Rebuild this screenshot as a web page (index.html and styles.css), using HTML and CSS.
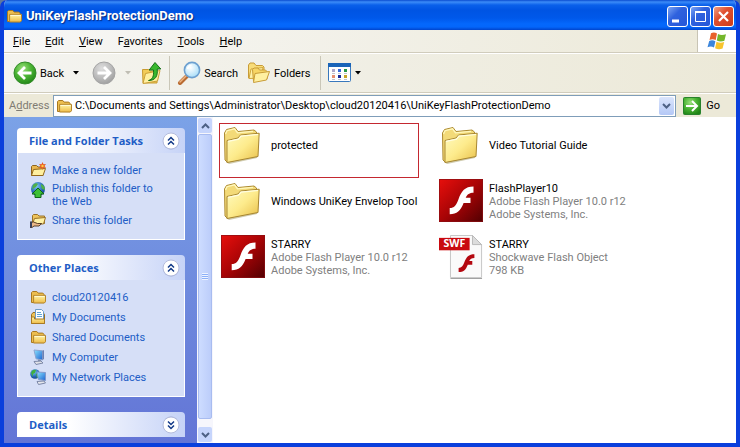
FILE: index.html
```html
<!DOCTYPE html>
<html lang="en">
<head>
<meta charset="utf-8">
<title>UniKeyFlashProtectionDemo</title>
<link rel="stylesheet" href="styles.css">
</head>
<body>
<svg class="sprite" aria-hidden="true">
  <defs>
    <linearGradient id="g-folder" x1="0" y1="0" x2="1" y2="1"><stop offset="0" stop-color="#fffbc0"/><stop offset=".5" stop-color="#fdeb8c"/><stop offset="1" stop-color="#e8be48"/></linearGradient>
    <linearGradient id="g-small" x1="0" y1="0" x2="0" y2="1"><stop offset="0" stop-color="#fff6a8"/><stop offset="1" stop-color="#eebb48"/></linearGradient>
    <radialGradient id="g-green" cx=".4" cy=".3" r=".75"><stop offset="0" stop-color="#9be07c"/><stop offset=".5" stop-color="#4bb434"/><stop offset="1" stop-color="#1f8416"/></radialGradient>
    <radialGradient id="g-gray" cx=".4" cy=".3" r=".75"><stop offset="0" stop-color="#dedede"/><stop offset=".6" stop-color="#bababa"/><stop offset="1" stop-color="#9c9c9c"/></radialGradient>
    <linearGradient id="g-red" x1="0" y1="0" x2="1" y2="1"><stop offset="0" stop-color="#e80f0c"/><stop offset=".5" stop-color="#a80406"/><stop offset="1" stop-color="#500002"/></linearGradient>
    <linearGradient id="g-screen" x1="0" y1="0" x2="1" y2="1"><stop offset="0" stop-color="#8ce4ff"/><stop offset="1" stop-color="#1c62d0"/></linearGradient>
    <radialGradient id="g-globe" cx=".4" cy=".3" r=".8"><stop offset="0" stop-color="#7cc8f0"/><stop offset=".6" stop-color="#2464b8"/><stop offset="1" stop-color="#103c80"/></radialGradient>
    <radialGradient id="g-lens" cx=".4" cy=".35" r=".7"><stop offset="0" stop-color="#ffffff"/><stop offset="1" stop-color="#a4dcf8"/></radialGradient>
  </defs>
  <symbol id="i-folder" viewBox="0 0 16 16">
    <path d="M1.500 13.500V3.600L2.600 2.500h4.200l1.400 1.600h4.600l1.200 1.200v8.400z" fill="#ecbe50" stroke="#a87820"/>
    <path d="M3.600 6.400h11.900v6.400l-1.200 1.200H3.600z" fill="url(#g-small)" stroke="#b5852a"/>
    <path d="M4.500 7.400h10" stroke="#fffbd8"/>
  </symbol>
  <symbol id="i-bigfolder" viewBox="0 0 44 44">
    <path d="M5 39 8 41 36 35l2-25-3 2z" fill="#a0955c" opacity=".5"/>
    <path d="M3.500 10 5.500 6.500 14 4.500l3 4 16-1.500 2.500 2V33L6 39l-2-2z" fill="#f3da78" stroke="#ac8a32"/>
    <path d="M4.500 11 6 7.700 13.500 5.800l3 4L32 8.300" fill="none" stroke="#fff8bc" stroke-width="1.300"/>
    <path d="M6 17.500 17 15l2.500-3 18.700-1.800L37 33.500 6 39.500z" fill="url(#g-folder)" stroke="#a88732"/>
    <path d="M7 18.400 17.500 16.100l2.500-3L37 11.500" fill="none" stroke="#fffde0" stroke-width="1.200"/>
  </symbol>
  <symbol id="i-flash" viewBox="0 0 44 44">
    <path d="M0 0h44v43H0z" fill="url(#g-red)"/>
    <path d="M.5.5h43v42H.5z" fill="none" stroke="#8c1014" opacity=".7"/>
    <path d="M34.500 7.500v6.200c-4 0-6.200 1.400-7.800 5.100h4.800V24h-6.900c-3 8-6.700 11.200-13.900 11.200V29c4.400 0 6.600-2.800 8.700-8.600C22.300 12.200 26 7.500 34.500 7.500z" fill="#fff"/>
  </symbol>
  <symbol id="i-swf" viewBox="0 0 46 46">
    <path d="M12 .5h23L44.500 10v34.500H12z" fill="#fafafa" stroke="#c4c4c4"/>
    <path d="M35 .5V10h9.500z" fill="#dcdcdc" stroke="#b8b8b8"/>
    <path d="M12 45.500h33" stroke="#9c9c9c"/>
    <path d="M0 3h32v13H0z" fill="#c90a10"/>
    <path d="M37 20v4c-3 0-4.400 1-5.400 3.300h3.200V31h-4.700c-2.200 5.600-4.500 7.600-9.600 7.600v-4.200c3 0 4.500-2 6-5.900C28.500 23 31 20 37 20z" fill="#b40810"/>
    <text x="16" y="13" class="swf-label">SWF</text>
  </symbol>
  <symbol id="i-back" viewBox="0 0 24 24">
    <circle cx="12" cy="12" r="11" fill="url(#g-green)" stroke="#338b2a"/>
    <path d="M18.500 12H7M12 6l-6 6 6 6" fill="none" stroke="#fff" stroke-width="2.800"/>
  </symbol>
  <symbol id="i-forward" viewBox="0 0 24 24">
    <circle cx="12" cy="12" r="11" fill="url(#g-gray)" stroke="#a4a4a4"/>
    <path d="M5.500 12H17M12 6l6 6-6 6" fill="none" stroke="#fff" stroke-width="2.800"/>
  </symbol>
  <symbol id="i-up" viewBox="0 0 24 24">
    <path d="M2.500 8.500h6l1.500 1.500h7v12l-14 0z" fill="#f2cc58" stroke="#c89a30"/>
    <path d="M5.500 12.500 20 9.500l-2.500 10.500L3 22.500z" fill="#fff0a0" stroke="#cba038"/>
    <path d="M8.500 19.500c4-1 5.500-4 5-10.500H9.200L15 1.500 20.800 8h-3.600c.8 7-1.700 11.500-8.700 11.500z" fill="#39b82e" stroke="#167016"/>
  </symbol>
  <symbol id="i-search" viewBox="0 0 24 24">
    <path d="M10 15 3 22" stroke="#b96b32" stroke-width="4" stroke-linecap="round"/>
    <path d="M9 15 3 21" stroke="#eeb684" stroke-width="1.500" stroke-linecap="round"/>
    <circle cx="15" cy="9" r="7.600" fill="url(#g-lens)" stroke="#6da0d0" stroke-width="1.600"/>
    <path d="M10.500 8a5 5 0 0 1 4-3.800" fill="none" stroke="#fff" stroke-width="1.600"/>
  </symbol>
  <symbol id="i-folders" viewBox="0 0 24 24">
    <path d="M1.500 17V4L3 2h4l2 2.500h6.500L17 6v10z" fill="#f8dc78" stroke="#c89c38"/>
    <path d="m4 8 12-1.500L14 17 2 17.500z" fill="#fff2a8" stroke="#d0a63e"/>
    <path d="m6.500 20-1-11.500L7 7h4l1.500 2h6l1.500 1.500V18z" fill="#f7d666" stroke="#c89c38"/>
    <path d="m8 12.500 14.500-2L19.500 19 6.500 21.500z" fill="#fff0a0" stroke="#c89c38"/>
  </symbol>
  <symbol id="i-views" viewBox="0 0 24 20">
    <rect x=".5" y=".5" width="22" height="18" rx="1" fill="#fff" stroke="#3978bc"/>
    <path d="M0 0h23v4H0z" fill="#1a64b8"/>
    <path d="M4 6h3v3H4z" fill="#b0a8c8"/><path d="M10 6h3v3h-3z" fill="#3868d8"/><path d="M16 6h3v3h-3z" fill="#289848"/>
    <path d="M4 12h3v3H4z" fill="#e89070"/><path d="M10 12h3v3h-3z" fill="#1c2c98"/><path d="M16 12h3v3h-3z" fill="#c8a428"/>
    <path d="M4 10.500h3m3 0h3m3 0h3M4 16.500h3m3 0h3m3 0h3" stroke="#c4c4cc"/>
  </symbol>
  <symbol id="i-flag" viewBox="0 0 20 18">
    <path d="M4 1.200C6 .2 8 .2 10 1.500L8.700 8C6.500 6.800 4.500 6.900 2.500 7.900z" fill="#e8622c"/>
    <path d="M11 2c2.500 1.200 5 1.200 8 .2l-1.600 6.500c-2.500 1-5 1-7.600-.2z" fill="#74b72c"/>
    <path d="M2.200 9c2-1 4-1 6.200.2L7 15.500c-2.200-1.200-4-1.200-6.500-.2z" fill="#3c86dc"/>
    <path d="M9.500 9.700c2.500 1.200 5 1.200 7.700.2l-1.600 6.500c-2.500 1-4.900 1-7.500-.2z" fill="#f8c42c"/>
  </symbol>
  <symbol id="i-go" viewBox="0 0 18 18">
    <rect x=".5" y=".5" width="17" height="17" rx="1" fill="url(#g-green)" stroke="#28822c"/>
    <path d="M3 9h11M9 4l5 5-5 5" fill="none" stroke="#fff" stroke-width="2"/>
  </symbol>
  <symbol id="i-new" viewBox="0 0 16 16">
    <path d="M1.500 13.500V4.500l1-1h4L8 5h5v8.500z" fill="#e9b850" stroke="#8c6420"/>
    <path d="m3.500 7.500 12-1-2.500 7H1.500z" fill="#fff0a0" stroke="#94691c"/>
    <path d="m12.500 0 1 2.300 2.500-.3-1.500 2L16 6l-2.600-.3L12.500 8l-1-2.300L9 6l1.500-2L9 2l2.500.3z" fill="#e85c20"/>
    <circle cx="12.500" cy="4" r="1.200" fill="#ffd040"/>
  </symbol>
  <symbol id="i-publish" viewBox="0 0 16 16">
    <circle cx="8" cy="7" r="7" fill="url(#g-globe)"/>
    <path d="M3 3c2-2 4-2 5-1L6 5 4 6 2 8zM11 2c3 1 4 3 4 6l-3-1-1-3z" fill="#50b048"/>
    <path d="m8 6 6 6h-3v3.500H5V12H2z" fill="#3cc034" stroke="#0f6418"/>
  </symbol>
  <symbol id="i-share" viewBox="0 0 16 16">
    <path d="M2.500 11V3.500l1-1h4L9 4h5.500v7.500z" fill="#edc35c" stroke="#9a7228"/>
    <path d="m4.500 6.500 11-1-2 6.500H2.500z" fill="#fff1a4" stroke="#9a7228"/>
    <path d="M0 10.500 3.500 10l4 1.500h4.200L9 14H4L2 15.500H0z" fill="#eab888" stroke="#5a4028"/>
    <path d="M0 9.500h2v6H0z" fill="#38405c"/>
  </symbol>
  <symbol id="i-docs" viewBox="0 0 16 16">
    <path d="M1.500 14.500v-9l1.500-2h10l1.500 2v9z" fill="#edc158" stroke="#9a7020"/>
    <path d="M5.500.5h6l2 2v9h-8z" fill="#fff" stroke="#6c9cc8"/>
    <path d="M7 3.500h4M7 5.500h5M7 7.500h5" stroke="#60a4d8"/>
    <path d="M1.500 14.500V8h3v2h10v4.500z" fill="url(#g-small)" stroke="#a87a24"/>
  </symbol>
  <symbol id="i-computer" viewBox="0 0 16 16">
    <path d="m4 1 8.500.8V11L6 9.800z" fill="url(#g-screen)" stroke="#8ca4d0"/>
    <path d="m12.500 1.800 1.500-.8v9L12.500 11z" fill="#6c80b4"/>
    <path d="m8 10.500 3 .5v2H8z" fill="#8490ac"/>
    <path d="m4 12.500 7-.5 2 2-7 1.500z" fill="#e0e2e8" stroke="#7c88a8"/>
  </symbol>
  <symbol id="i-network" viewBox="0 0 16 16">
    <circle cx="5" cy="5" r="4.800" fill="url(#g-globe)"/>
    <path d="M1 4c1-3 3-4 5-3L5 4 3 5v3zM6 5l3-1v4L7 9z" fill="#40b040"/>
    <path d="m7 3 8.500.5v8L8.500 10.500z" fill="url(#g-screen)" stroke="#8098cc"/>
    <path d="m7 12.500 7-.5 1.500 2-7 1.500z" fill="#e4e6ec" stroke="#7c88a8"/>
  </symbol>
  <symbol id="i-caret" viewBox="0 0 6 4"><path d="M0 0h6L3 3.500z"/></symbol>
  <symbol id="i-chevron" viewBox="0 0 9 6"><path d="m1 1 3.500 3.500L8 1" fill="none" stroke="#4d6185" stroke-width="2"/></symbol>
  <symbol id="i-double" viewBox="0 0 18 18">
    <circle cx="9" cy="9.500" r="8" fill="#8c9cd0" opacity=".6"/>
    <circle cx="9" cy="9" r="8" fill="#fff" stroke="#b4bcdc"/>
    <path d="m6 8.500 3-3 3 3m-6 4 3-3 3 3" fill="none" stroke="#123a88" stroke-width="1.500"/>
  </symbol>
</svg>

<div class="window">
  <header class="titlebar">
    <svg class="icon"><use href="#i-folder"/></svg>
    <h1>UniKeyFlashProtectionDemo</h1>
    <div class="caption-buttons">
      <button aria-label="Minimize"><svg viewBox="0 0 19 19"><path d="M4 14h7" stroke="#fff" stroke-width="3"/></svg></button>
      <button aria-label="Maximize"><svg viewBox="0 0 19 19"><path d="M4.500 4.500h10v10h-10z" fill="none" stroke="#fff"/><path d="M4 5h11" stroke="#fff" stroke-width="2"/></svg></button>
      <button class="close" aria-label="Close"><svg viewBox="0 0 19 19"><path d="m5 5 9 9m0-9-9 9" stroke="#fff" stroke-width="2.200"/></svg></button>
    </div>
  </header>

  <div class="menubar">
    <nav class="menus">
      <button><u>F</u>ile</button>
      <button><u>E</u>dit</button>
      <button><u>V</u>iew</button>
      <button>F<u>a</u>vorites</button>
      <button><u>T</u>ools</button>
      <button><u>H</u>elp</button>
    </nav>
    <div class="brand"><svg><use href="#i-flag"/></svg></div>
  </div>

  <div class="toolbar">
    <button class="tool"><svg class="tool-icon"><use href="#i-back"/></svg>Back</button>
    <button class="drop" aria-label="Back history"><svg><use href="#i-caret"/></svg></button>
    <button class="tool forward" aria-label="Forward" disabled><svg class="tool-icon"><use href="#i-forward"/></svg></button>
    <button class="drop" aria-label="Forward history" disabled><svg><use href="#i-caret"/></svg></button>
    <button class="tool" aria-label="Up"><svg class="tool-icon"><use href="#i-up"/></svg></button>
    <span class="divider"></span>
    <button class="tool"><svg class="tool-icon"><use href="#i-search"/></svg>Search</button>
    <button class="tool folders"><svg class="tool-icon"><use href="#i-folders"/></svg>Folders</button>
    <span class="divider"></span>
    <button class="tool" aria-label="Views"><svg class="views-icon"><use href="#i-views"/></svg><svg class="caret"><use href="#i-caret"/></svg></button>
  </div>

  <form class="addressbar">
    <label for="address">A<u>d</u>dress</label>
    <div class="address-field">
      <svg class="icon"><use href="#i-folder"/></svg>
      <input id="address" type="text" value="C:\Documents and Settings\Administrator\Desktop\cloud20120416\UniKeyFlashProtectionDemo">
      <button type="button" class="combo" aria-label="Show addresses"><svg><use href="#i-chevron"/></svg></button>
    </div>
    <button type="button" class="go"><svg><use href="#i-go"/></svg>Go</button>
  </form>

  <main class="explorer">
    <aside class="tasks">
      <section class="panel">
        <header><h2>File and Folder Tasks</h2><button aria-label="Collapse"><svg><use href="#i-double"/></svg></button></header>
        <ul>
          <li><svg class="icon"><use href="#i-new"/></svg><a href="#">Make a new folder</a></li>
          <li class="wrapped"><svg class="icon"><use href="#i-publish"/></svg><a href="#">Publish this folder to the Web</a></li>
          <li><svg class="icon"><use href="#i-share"/></svg><a href="#">Share this folder</a></li>
        </ul>
      </section>
      <section class="panel">
        <header><h2>Other Places</h2><button aria-label="Collapse"><svg><use href="#i-double"/></svg></button></header>
        <ul>
          <li><svg class="icon"><use href="#i-folder"/></svg><a href="#">cloud20120416</a></li>
          <li><svg class="icon"><use href="#i-docs"/></svg><a href="#">My Documents</a></li>
          <li><svg class="icon"><use href="#i-folder"/></svg><a href="#">Shared Documents</a></li>
          <li><svg class="icon"><use href="#i-computer"/></svg><a href="#">My Computer</a></li>
          <li><svg class="icon"><use href="#i-network"/></svg><a href="#">My Network Places</a></li>
        </ul>
      </section>
      <section class="panel collapsed">
        <header><h2>Details</h2><button aria-label="Expand"><svg><use href="#i-double"/></svg></button></header>
      </section>
    </aside>
    <div class="scrollbar">
      <button class="scroll-up" aria-label="Scroll up"><svg><use href="#i-chevron"/></svg></button>
      <div class="thumb"><span class="grip"></span></div>
      <button aria-label="Scroll down"><svg><use href="#i-chevron"/></svg></button>
    </div>
    <ul class="files">
      <li class="marked"><svg class="file-icon"><use href="#i-bigfolder"/></svg><p>protected</p></li>
      <li><svg class="file-icon"><use href="#i-bigfolder"/></svg><p>Video Tutorial Guide</p></li>
      <li><svg class="file-icon"><use href="#i-bigfolder"/></svg><p>Windows UniKey Envelop Tool</p></li>
      <li><svg class="file-icon"><use href="#i-flash"/></svg><p>FlashPlayer10<small>Adobe Flash Player 10.0 r12</small><small>Adobe Systems, Inc.</small></p></li>
      <li><svg class="file-icon"><use href="#i-flash"/></svg><p>STARRY<small>Adobe Flash Player 10.0 r12</small><small>Adobe Systems, Inc.</small></p></li>
      <li><svg class="file-icon"><use href="#i-swf"/></svg><p>STARRY<small>Shockwave Flash Object</small><small>798 KB</small></p></li>
    </ul>
  </main>
</div>
</body>
</html>
```
FILE: styles.css
```css
* { box-sizing: border-box; }

body {
  margin: 0;
  background: #60789c;
  color: #000;
  font: 11px/13px Tahoma, Roboto, sans-serif;
}

h1, h2, p, ul { margin: 0; padding: 0; }
ul { list-style: none; }

button, input {
  margin: 0;
  padding: 0;
  border: 0;
  background: none;
  color: inherit;
  font: inherit;
}

svg { display: block; flex: none; }
.sprite { position: absolute; width: 0; height: 0; }
.icon { width: 16px; height: 16px; }

.window {
  display: flex;
  flex-direction: column;
  height: 100vh;
  border: solid #0a3fdc;
  border-width: 0 4px 4px;
  border-radius: 7px 7px 0 0;
  overflow: hidden;
  background: #ece9d8;
}

/* Title bar */
.titlebar {
  display: flex;
  align-items: center;
  gap: 4px;
  flex: none;
  height: 30px;
  margin: 0 -4px;
  padding: 2px 6px 0;
  background: linear-gradient(#0a4cd0, #3c8cf8 2px, #0a60ea 5px, #0054e3 10px, #0058ea 18px, #0468fc 24px, #0466fa 27px, #0044cc);
}

.titlebar h1 {
  flex: 1;
  color: #fff;
  font: bold 13px/18px "Trebuchet MS", Roboto, sans-serif;
  text-shadow: 1px 1px 1px #0a2a80;
}

.caption-buttons { display: flex; gap: 2px; }

.caption-buttons button {
  width: 21px;
  height: 21px;
  border: 1px solid #fff;
  border-radius: 3px;
  background: linear-gradient(135deg, #7ba4f4, #2f62de 40%, #2456d8);
}

.caption-buttons .close { background: linear-gradient(135deg, #f0a084, #e05030 40%, #cc3c18); }

/* Menus */
.menubar {
  display: flex;
  flex: none;
  height: 23px;
  border-bottom: 1px solid #d0ccbc;
  background: linear-gradient(90deg, #f7f7f6, #ece9d8);
}

.menus { display: flex; flex: 1; align-items: center; padding-left: 1px; }
.menus button { padding: 0 7px 0 8px; }

.brand {
  display: grid;
  place-items: center;
  width: 39px;
  border-left: 1px solid #c8c4b4;
  background: #fff;
}

.brand svg { width: 20px; height: 18px; }

/* Toolbar */
.toolbar {
  display: flex;
  align-items: center;
  flex: none;
  height: 40px;
  padding-left: 9px;
  border-top: 1px solid #fff;
  border-bottom: 1px solid #d0ccbc;
  background: linear-gradient(90deg, #f4f4f0, #ece9d8);
}

.tool { display: flex; align-items: center; gap: 3px; }
.tool-icon { width: 24px; height: 24px; }
.drop { padding: 0 9px; }
.drop svg, .caret { width: 6px; height: 4px; }
.drop:disabled { fill: #c0beb4; }
.forward { margin-left: 4px; }
.folders { margin: 0 5px 0 9px; }
.divider { width: 1px; height: 34px; margin: 0 7px 0 5px; background: #cac7b8; }
.views-icon { width: 24px; height: 20px; }

/* Address bar */
.addressbar {
  display: flex;
  align-items: center;
  flex: none;
  height: 24px;
  padding: 0 16px 0 5px;
  border-top: 1px solid #fff;
}

.addressbar label { width: 44px; color: #7f7c73; }

.address-field {
  display: flex;
  align-items: center;
  flex: 1;
  height: 22px;
  gap: 3px;
  padding: 0 1px 0 2px;
  border: 1px solid #7f9db9;
  background: #fff;
}

.address-field input { flex: 1; min-width: 0; height: 16px; outline: 0; }

.combo {
  display: grid;
  place-items: center;
  width: 15px;
  height: 18px;
  border-radius: 2px;
  background: linear-gradient(#dbe5fc, #b4c8f6);
}

.combo svg, .scrollbar svg { width: 9px; height: 6px; }
.go { display: flex; align-items: center; gap: 5px; margin-left: 7px; }
.go svg { width: 18px; height: 18px; }

/* Explorer body */
.explorer {
  display: grid;
  grid-template-columns: 193px 16px 1fr;
  flex: 1;
  min-height: 0;
  background: #fff;
}

.tasks {
  display: flex;
  flex-direction: column;
  gap: 15px;
  padding: 11px 12px 0 13px;
  overflow: hidden;
  background: linear-gradient(#7ba2e7, #6375d6);
}

.panel { flex: none; }

.panel header {
  display: flex;
  align-items: center;
  justify-content: space-between;
  height: 25px;
  padding: 0 5px 0 12px;
  border-radius: 4px 4px 0 0;
  background: linear-gradient(90deg, #fff 30%, #c6d3f7);
}

.panel h2 {
  color: #215dc6;
  font: bold 11px/16px Tahoma, "Open Sans", sans-serif;
}

.panel header svg { width: 18px; height: 18px; }
.collapsed header svg { transform: rotate(180deg); }

.panel ul {
  display: flex;
  flex-direction: column;
  gap: 4px;
  padding: 9px 24px 11px 12px;
  border: solid #fff;
  border-width: 0 1px 1px;
  background: #d6dff7;
}

.panel li { display: flex; align-items: center; gap: 6px; }
.panel .wrapped { align-items: flex-start; }
.panel li a { color: #215dc6; text-decoration: none; }

.scrollbar {
  display: flex;
  flex-direction: column;
  padding: 1px;
  background: #f6f6fc;
}

.scrollbar button {
  display: grid;
  place-items: center;
  flex: none;
  height: 15px;
  border-radius: 2px;
  background: #c6d5fc;
}

.scroll-up svg { transform: rotate(180deg); }

.thumb {
  display: grid;
  place-items: center;
  flex: 1;
  margin: 1px 0 8px;
  border: 1px solid #a8bcf0;
  border-radius: 2px;
  background: linear-gradient(90deg, #cddcff, #bccdfa);
}

.grip {
  width: 6px;
  height: 7px;
  background: repeating-linear-gradient(#f0f4ff 0 1px, #8cb0f8 1px 2px);
}

/* File tiles */
.files {
  display: grid;
  grid-template-columns: repeat(auto-fill, 200px);
  grid-auto-rows: 55px;
  align-content: start;
  gap: 1px 18px;
  padding: 6px 0 0 6px;
}

.files li {
  display: flex;
  align-items: center;
  gap: 6px;
  padding: 0 1px 11px;
  border: 1px solid transparent;
}

.files .marked { border-color: #c42830; }
.file-icon { width: 44px; height: 44px; }
.files p { white-space: nowrap; }
.files small { display: block; color: #808080; font-size: 11px; }
.swf-label { fill: #fff; font: bold 11px "Open Sans", sans-serif; text-anchor: middle; }
```
